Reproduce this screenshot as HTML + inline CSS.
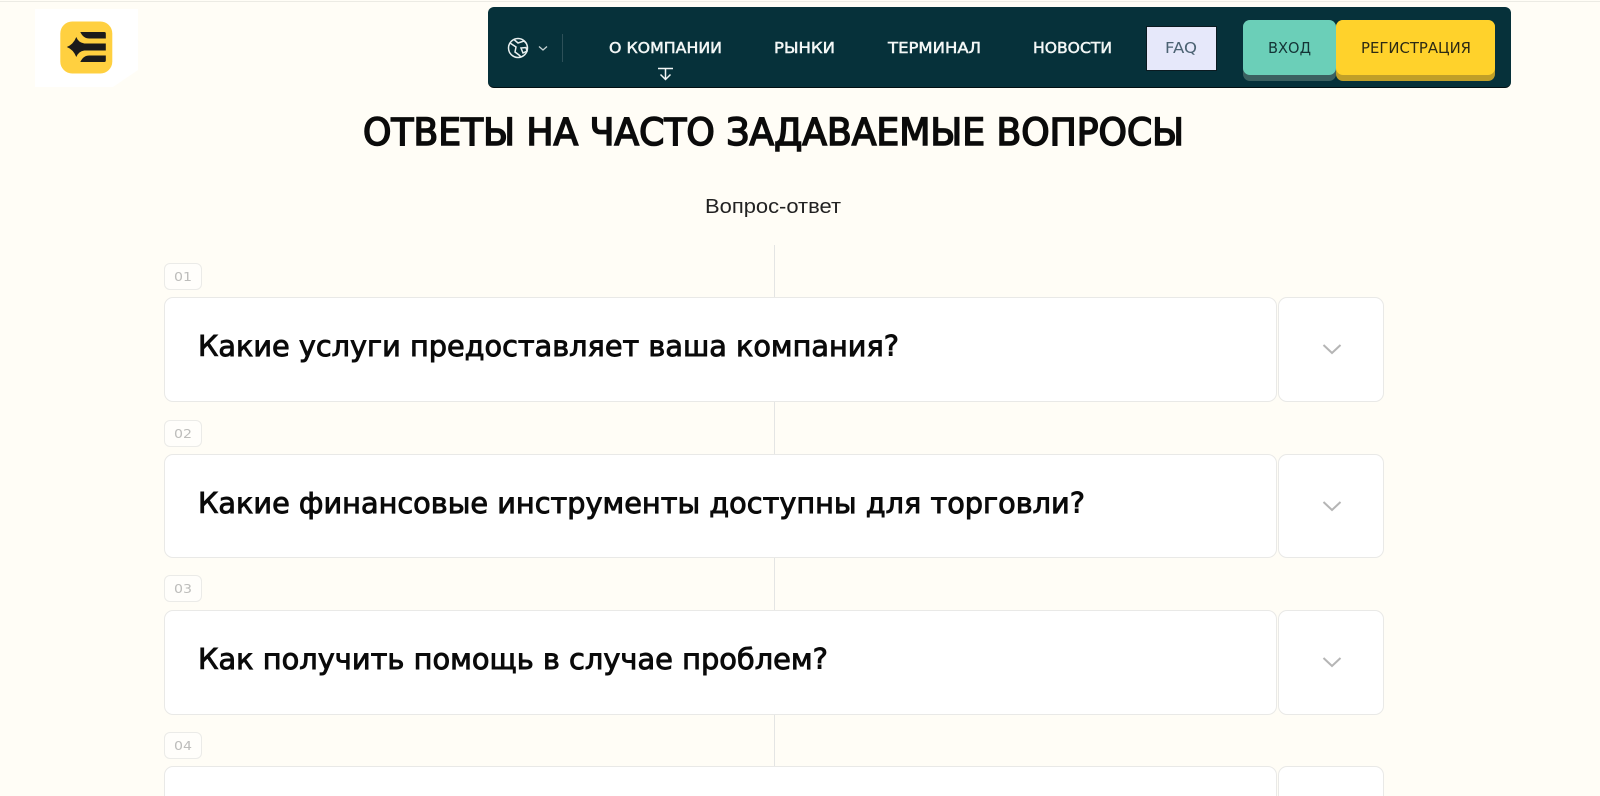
<!DOCTYPE html>
<html lang="ru">
<head>
<meta charset="utf-8">
<title>Вопрос-ответ</title>
<style>
html,body{margin:0;padding:0;background:#fffdf6}
#p{position:relative;width:1600px;height:796px;overflow:hidden;background:#fffdf6}
.a{position:absolute;box-sizing:border-box}
.card{background:#fff;border:1.5px solid #e9e9e7;border-radius:9px}
.tag{background:#fffefb;border:1.5px solid #ebebe8;border-radius:6px;left:164px;width:38px;height:27px}
svg{position:absolute;left:0;top:0}
text{font-family:"DejaVu Sans","Liberation Sans",sans-serif}
</style>
</head>
<body>
<div id="p">
<div class="a" style="left:0;top:1px;width:1600px;height:1px;background:#ecebe4"></div>
<div class="a" style="left:774px;top:245px;width:1px;height:551px;background:#e4e5e4"></div>

<div class="a tag" style="top:263px"></div>
<div class="a card" style="left:164px;top:297px;width:1113px;height:105px"></div>
<div class="a card" style="left:1278px;top:297px;width:106px;height:105px"></div>
<div class="a tag" style="top:420px"></div>
<div class="a card" style="left:164px;top:454px;width:1113px;height:104px"></div>
<div class="a card" style="left:1278px;top:454px;width:106px;height:104px"></div>
<div class="a tag" style="top:575px"></div>
<div class="a card" style="left:164px;top:610px;width:1113px;height:105px"></div>
<div class="a card" style="left:1278px;top:610px;width:106px;height:105px"></div>
<div class="a tag" style="top:732px"></div>
<div class="a card" style="left:164px;top:766px;width:1113px;height:60px"></div>
<div class="a card" style="left:1278px;top:766px;width:106px;height:60px"></div>

<div class="a" style="left:488px;top:7px;width:1023px;height:81px;background:#06313a;border-bottom:1px solid #020f12;border-radius:6px"></div>
<div class="a" style="left:1146px;top:26px;width:71px;height:45px;background:#e6e8fa;border:1px solid #0a1a20"></div>
<div class="a" style="left:1243px;top:20px;width:93px;height:61px;background:#3b6060;border-radius:7px"></div>
<div class="a" style="left:1243px;top:20px;width:93px;height:55px;background:#6bcfb8;border-radius:7px"></div>
<div class="a" style="left:1336px;top:20px;width:159px;height:61px;background:#c09f28;border-radius:7px"></div>
<div class="a" style="left:1336px;top:20px;width:159px;height:55px;background:#ffd22b;border-radius:7px"></div>

<svg width="1600" height="796" viewBox="0 0 1600 796" xmlns="http://www.w3.org/2000/svg">
  <!-- logo -->
  <path d="M35 9H138V70L113 87H35Z" fill="#fff"/>
  <g transform="translate(-0.7,-0.5)">
  <rect x="61" y="22" width="52" height="52" rx="12" fill="#ffd040"/>
  <path d="M81 32.5H105a1.5 1.5 0 0 1 1.5 1.5V39H90Q84 39 81 32.5Z" fill="#1b1b1b"/>
  <path d="M81 62.5H105a1.5 1.5 0 0 0 1.5-1.5V56H90Q84 56 81 62.5Z" fill="#1b1b1b"/>
  <path d="M67.5 47.5Q74 45 77 37.5Q79 43 85 44H106.500V51H85Q79 52 77 57.500Q74 50 67.500 47.500Z" fill="#1b1b1b"/>
  </g>

  <!-- globe + chevron + divider -->
  <g fill="none" stroke="#e8efef" stroke-width="1.500">
    <circle cx="518" cy="48" r="9.500"/>
    <path d="M510 43L516 47L515 52L519 55L521 57"/>
    <path d="M514 39.500L518 43L524 41L526 43"/>
    <path d="M521 48L526 47.500L527 51L523 53Z"/>
  </g>
  <path d="M539 46.500L543 50L547 46.500" fill="none" stroke="#c5d2d3" stroke-width="1.300"/>
  <rect x="562" y="34" width="1" height="28" fill="#2d5058"/>
  <!-- arrow -->
  <path d="M658 68.500H673M665.500 68.500V79.500M660.500 74.500L665.500 79.500L670.500 74.500" fill="none" stroke="#f2f6f5" stroke-width="1.500"/>

  <!-- nav text -->
  <g font-size="15.500" fill="#f3f7f6" stroke="#f3f7f6" stroke-width=".5">
    <text x="609" y="53" textLength="113" lengthAdjust="spacingAndGlyphs">О КОМПАНИИ</text>
    <text x="774" y="53" textLength="61" lengthAdjust="spacingAndGlyphs">РЫНКИ</text>
    <text x="888" y="53" textLength="93" lengthAdjust="spacingAndGlyphs">ТЕРМИНАЛ</text>
    <text x="1033" y="53" textLength="79" lengthAdjust="spacingAndGlyphs">НОВОСТИ</text>
  </g>
  <text x="1165" y="53" font-size="15.500" fill="#4b6272" textLength="32" lengthAdjust="spacingAndGlyphs">FAQ</text>
  <text x="1268" y="53" font-size="15.500" fill="#143436" textLength="43" lengthAdjust="spacingAndGlyphs">ВХОД</text>
  <text x="1361" y="53" font-size="15.500" fill="#2c2a14" textLength="110" lengthAdjust="spacingAndGlyphs">РЕГИСТРАЦИЯ</text>

  <!-- headings -->
  <text x="363" y="145" font-size="37" fill="#0b0b0b" stroke="#0b0b0b" stroke-width="1.6" textLength="821" lengthAdjust="spacingAndGlyphs">ОТВЕТЫ НА ЧАСТО ЗАДАВАЕМЫЕ ВОПРОСЫ</text>
  <text x="705" y="213" font-size="20" fill="#222" textLength="136" lengthAdjust="spacingAndGlyphs" style="font-family:'Liberation Sans',sans-serif">Вопрос-ответ</text>

  <!-- tags -->
  <g font-size="12" fill="#bdbdbb">
    <text x="174" y="281" textLength="18" lengthAdjust="spacingAndGlyphs">01</text>
    <text x="174" y="438" textLength="18" lengthAdjust="spacingAndGlyphs">02</text>
    <text x="174" y="593" textLength="18" lengthAdjust="spacingAndGlyphs">03</text>
    <text x="174" y="750" textLength="18" lengthAdjust="spacingAndGlyphs">04</text>
  </g>

  <!-- questions -->
  <g font-size="28.500" fill="#0a0a0a" stroke="#0a0a0a" stroke-width=".9">
    <text x="198" y="356" textLength="701" lengthAdjust="spacingAndGlyphs">Какие услуги предоставляет ваша компания?</text>
    <text x="198" y="513" textLength="887" lengthAdjust="spacingAndGlyphs">Какие финансовые инструменты доступны для торговли?</text>
    <text x="198" y="669" textLength="630" lengthAdjust="spacingAndGlyphs">Как получить помощь в случае проблем?</text>
  </g>

  <!-- chevrons -->
  <g fill="none" stroke="#b5b5b5" stroke-width="2">
    <path d="M1323.500 345L1332 353L1340.500 345"/>
    <path d="M1323.500 502L1332 510L1340.500 502"/>
    <path d="M1323.500 658L1332 666L1340.500 658"/>
  </g>
</svg>
</div>
</body>
</html>
